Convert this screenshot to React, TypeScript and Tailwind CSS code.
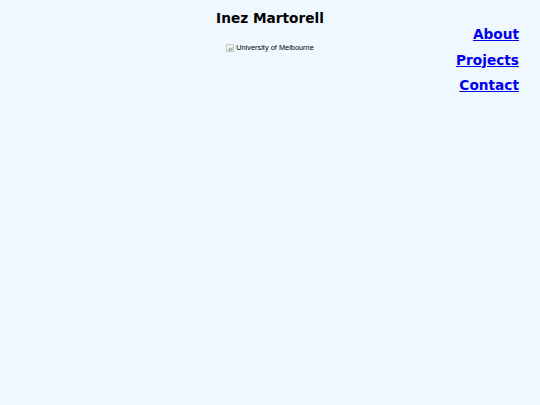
import React from 'react'

const links = ['About', 'Projects', 'Contact']

export default function App () {
  return (
    <div className="min-h-screen w-full bg-[#f0f8ff] font-['DejaVu_Sans',sans-serif] text-black">
      <header className="grid grid-cols-[1fr_auto_1fr]">
        <div />
        <div className="flex flex-col items-center pt-[10px]">
          <h1 className="text-[13.7px] font-bold leading-[17px]">Inez Martorell</h1>
          <span className="mt-[16px] flex items-center gap-[2px] font-['Liberation_Sans',sans-serif] text-[7.4px] leading-[10px] text-black">
            <svg width="8" height="8" viewBox="0 0 8 8">
              <rect x="0.5" y="0.5" width="7" height="7" fill="#f4f4f4" stroke="#c8c8c8" />
              <path d="M1.5 6.5 L3.5 3.5 L5 5 L6.5 2.5 V6.5 Z" fill="#8ab68a" />
            </svg>
            University of Melbourne
          </span>
        </div>
        <nav className="flex flex-col items-end gap-[6.5px] pr-[21px] pt-[25px]">
          {links.map(l => (
            <a key={l} href="#" className="text-[13.7px] font-bold leading-[19px] text-[#0000ee] underline">{l}</a>
          ))}
        </nav>
      </header>
    </div>
  )
}
